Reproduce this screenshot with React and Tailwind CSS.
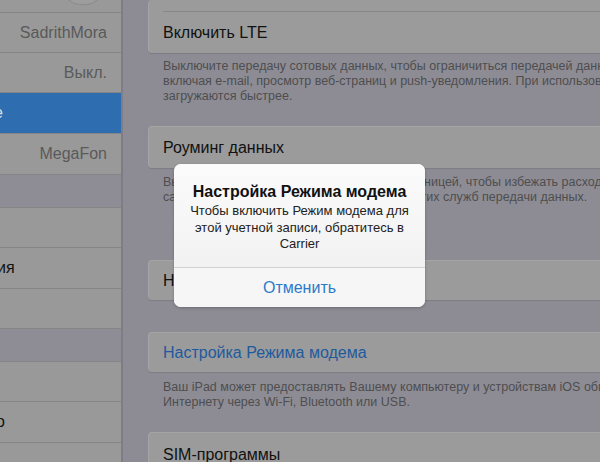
import React from "react";

const font = { fontFamily: '"Liberation Sans", Arial, sans-serif' };

function SideRow({ children, className = "", right = true, h = "h-[41px]" }) {
  return (
    <div className={`${h} shrink-0 border-b border-[#858585] flex items-center ${right ? "justify-end pr-[14px]" : ""} ${className}`}>
      {children}
    </div>
  );
}

function Card({ children, h = "h-[41px]", className = "" }) {
  return (
    <div className={`${h} shrink-0 bg-[#9b9b9b] rounded-l-[4px] border-t border-l border-[#a5a5a5] shadow-[0_1px_1px_rgba(0,0,0,0.12)] flex items-center pl-[14px] text-[16px] ${className}`}>
      {children}
    </div>
  );
}

export default function App() {
  return (
    <div className="w-[600px] h-[462px] overflow-hidden relative flex bg-[#8d8c95]" style={font}>
      {/* sidebar */}
      <div className="w-[121px] shrink-0 bg-[#999999] flex flex-col text-[16px]">
        <div className="h-[13px] shrink-0 border-b border-[#858585] relative overflow-hidden">
          <div className="absolute left-[64px] top-[-26px] w-[38px] h-[31px] rounded-full border border-[#8a8a8a] bg-[#9d9d9d]" />
        </div>
        <SideRow h="h-[40px]" className="text-[#5a5a5a]">SadrithMora</SideRow>
        <SideRow h="h-[40px]" className="text-[#5a5a5a]">Выкл.</SideRow>
        <SideRow right={false} className="bg-[#2e6db0] text-[#d8e0ea] border-[#2e6db0]">
          <span className="-ml-[6px]">е</span>
        </SideRow>
        <SideRow className="text-[#5a5a5a]">MegaFon</SideRow>
        <div className="h-[33px] shrink-0 bg-[#8e8d96] border-b border-[#858585]" />
        <SideRow h="h-[40px]" />
        <SideRow right={false} className="text-[#111]">
          <span className="-ml-[3px]">ия</span>
        </SideRow>
        <SideRow h="h-[40px]" />
        <div className="h-[33px] shrink-0 bg-[#8e8d96] border-b border-[#858585]" />
        <SideRow h="h-[40px]" />
        <SideRow right={false} className="text-[#111]">
          <span className="-ml-[4px]">о</span>
        </SideRow>
        <SideRow />
      </div>
      <div className="w-[2px] shrink-0 bg-[#7e7d86]" />

      {/* main */}
      <div className="flex-1 pl-[25px] flex flex-col text-[#111] whitespace-nowrap">
        <div className="h-[53px] shrink-0 bg-[#9b9b9b] rounded-l-[4px] border-l border-[#a5a5a5] shadow-[0_1px_1px_rgba(0,0,0,0.12)] flex flex-col">
          <div className="h-[12px] ml-[14px] border-b border-[#878787]" />
          <div className="flex-1 flex items-center pl-[14px] text-[16px]">Включить LTE</div>
        </div>
        <div className="h-[73px] shrink-0 pl-[15px] pt-[6px] text-[12.5px] leading-[15px] text-[#4e4e4e]">
          <div>Выключите передачу сотовых данных, чтобы ограничиться передачей данных по Wi-Fi,</div>
          <div>включая e-mail, просмотр веб-страниц и push-уведомления. При использовании LTE данные</div>
          <div>загружаются быстрее.</div>
        </div>
        <Card h="h-[42px]">Роуминг данных</Card>
        <div className="h-[92px] shrink-0 pl-[15px] pt-[7px] text-[12.5px] leading-[15px] text-[#4e4e4e]">
          <div>Выключите роуминг данных, находясь за границей, чтобы избежать расходов на просмотр веб-</div>
          <div>сайтов, e-mail и при использовании всех других служб передачи данных.</div>
        </div>
        <Card h="h-[40px]">Настройки APN</Card>
        <div className="h-[32px] shrink-0" />
        <Card h="h-[40px]" className="text-[#1e5a9e]">Настройка Режима модема</Card>
        <div className="h-[60px] shrink-0 pl-[15px] pt-[8px] text-[12.5px] leading-[15px] text-[#4e4e4e]">
          <div>Ваш iPad может предоставлять Вашему компьютеру и устройствам iOS общий доступ к</div>
          <div>Интернету через Wi-Fi, Bluetooth или USB.</div>
        </div>
        <Card h="h-[42px]" className="items-start pt-[10px]">SIM-программы</Card>
      </div>

      {/* alert */}
      <div className="absolute left-[174px] top-[164px] w-[251px] h-[143px] rounded-[7px] bg-[#f4f4f4] shadow-[0_1px_3px_rgba(0,0,0,0.25)] flex flex-col overflow-hidden">
        <div className="h-[103px] flex flex-col items-center pt-[18px] px-[12px] text-center bg-gradient-to-b from-[#fbfbfb] to-[#f2f2f2]">
          <div className="text-[16px] font-bold leading-[20px] text-[#111]">Настройка Режима модема</div>
          <div className="text-[13px] leading-[16.5px] text-[#222] mt-[1px]">
            <div>Чтобы включить Режим модема для</div>
            <div>этой учетной записи, обратитесь в</div>
            <div>Carrier</div>
          </div>
        </div>
        <div className="h-px bg-[#d2d2d2]" />
        <div className="flex-1 flex items-center justify-center text-[16px] text-[#2a7ac8] bg-[#f6f6f6]">Отменить</div>
      </div>
    </div>
  );
}
